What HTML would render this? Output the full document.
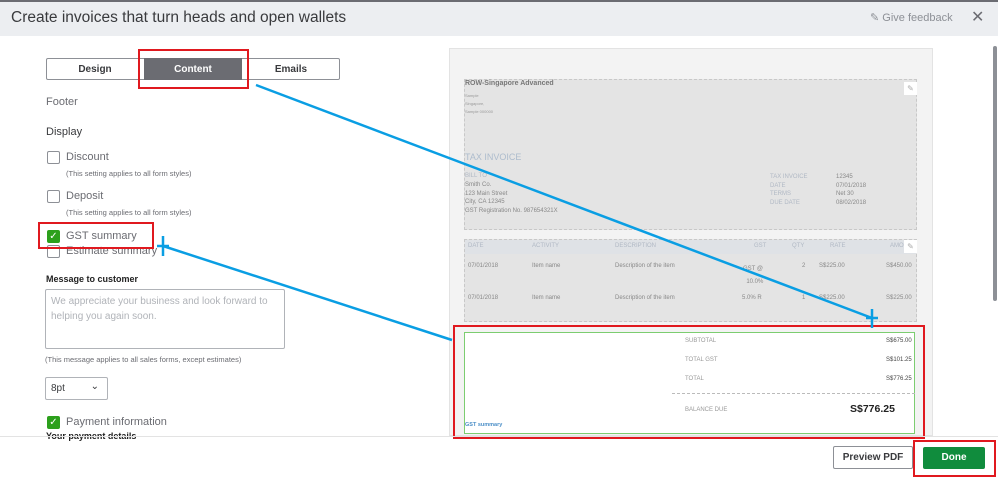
<!DOCTYPE html>
<html><head><meta charset="utf-8"><style>
*{box-sizing:border-box;margin:0;padding:0}
body{width:998px;height:480px;overflow:hidden;background:#fff;font-family:"Liberation Sans",sans-serif;position:relative;color:#393a3d}
.a{position:absolute}
.hdr{left:0;top:0;width:998px;height:36px;background:#eceef1;border-top:2px solid #6b6c72}
.t{font-size:15.5px;color:#393a3d}
.cb{width:13px;height:13px;border:1px solid #8d9096;border-radius:2px;background:#fff}
.cbon{width:13px;height:13px;background:#2ca01c;border-radius:2px;color:#fff;font-size:10px;line-height:13px;text-align:center}
.lbl{font-size:11px;color:#6b6c72}
.sm{font-size:7.5px;color:#6b6c72}
.p{font-size:6px;color:#888}
.pl{font-size:6px;color:#b0b8c4}
</style></head><body>
<div class="a hdr"></div>
<div class="a t" style="left:11px;top:9px">Create invoices that turn heads and open wallets</div>
<div class="a" style="left:870px;top:11px;font-size:11px;color:#8d9096">&#9998; Give feedback</div>
<div class="a" style="left:971px;top:7px;font-size:16px;color:#6b6c72">✕</div>
<div class="a" style="left:993px;top:46px;width:4px;height:255px;background:#8d9096;border-radius:2px"></div>

<div class="a" style="left:46px;top:58px;width:294px;height:22px;border:1px solid #8d9096;border-radius:2px"></div>
<div class="a" style="left:144px;top:58px;width:98px;height:22px;background:#6b6c72"></div>
<div class="a" style="left:46px;top:64px;width:98px;text-align:center;font-size:10px;font-weight:bold">Design</div>
<div class="a" style="left:144px;top:64px;width:98px;text-align:center;font-size:10px;font-weight:bold;color:#fff">Content</div>
<div class="a" style="left:242px;top:64px;width:98px;text-align:center;font-size:10px;font-weight:bold">Emails</div>
<div class="a" style="left:138px;top:49px;width:111px;height:40px;border:2px solid #e0191f"></div>

<div class="a lbl" style="left:46px;top:96px">Footer</div>
<div class="a lbl" style="left:46px;top:126px;color:#393a3d">Display</div>
<div class="a cb" style="left:47px;top:151px"></div><div class="a lbl" style="left:66px;top:151px">Discount</div>
<div class="a sm" style="left:66px;top:169px">(This setting applies to all form styles)</div>
<div class="a cb" style="left:47px;top:190px"></div><div class="a lbl" style="left:66px;top:190px">Deposit</div>
<div class="a sm" style="left:66px;top:208px">(This setting applies to all form styles)</div>
<div class="a cbon" style="left:47px;top:230px">✓</div><div class="a lbl" style="left:66px;top:230px">GST summary</div>
<div class="a cb" style="left:47px;top:245px"></div><div class="a lbl" style="left:66px;top:245px">Estimate summary</div>
<div class="a" style="left:38px;top:222px;width:116px;height:27px;border:2px solid #e0191f"></div>
<div class="a" style="left:46px;top:274px;font-size:9px;font-weight:bold;color:#222">Message to customer</div>
<div class="a" style="left:45px;top:289px;width:240px;height:60px;border:1px solid #b0b3b8;border-radius:2px;padding:4px 5px;font-size:10px;line-height:15px;color:#b0b3b8">We appreciate your business and look forward to helping you again soon.</div>
<div class="a sm" style="left:45px;top:355px">(This message applies to all sales forms, except estimates)</div>
<div class="a" style="left:45px;top:377px;width:63px;height:23px;border:1px solid #b0b3b8;border-radius:2px;font-size:10px;padding:5px 5px">8pt<span style="position:absolute;right:8px;top:3px;font-size:10px">&#8964;</span></div>
<div class="a cbon" style="left:47px;top:416px">✓</div><div class="a lbl" style="left:66px;top:416px">Payment information</div>
<div class="a" style="left:46px;top:431px;font-size:9px;font-weight:bold;color:#222">Your payment details</div>

<div class="a" style="left:449px;top:48px;width:484px;height:388px;background:#f3f3f3;border:1px solid #e3e3e3"></div>
<div class="a" style="left:464px;top:79px;width:453px;height:151px;background:#e4e4e4;border:1px dashed #c8c8c8"></div>
<div class="a" style="left:465px;top:80px;font-size:7px;font-weight:bold;color:#777">ROW-Singapore Advanced</div>
<div class="a" style="left:465px;top:92px;font-size:4px;color:#999;line-height:8px">Sample<br>Singapore,<br>Sample 000000</div>
<div class="a" style="left:465px;top:152px;font-size:9px;color:#adbccd">TAX INVOICE</div>
<div class="a pl" style="left:465px;top:173px">BILL TO</div>
<div class="a p" style="left:465px;top:181px;line-height:8.7px">Smith Co.<br>123 Main Street<br>City, CA 12345<br>GST Registration No. 987654321X</div>
<div class="a pl" style="left:770px;top:173px;line-height:8.7px">TAX INVOICE<br>DATE<br>TERMS<br>DUE DATE</div>
<div class="a p" style="left:836px;top:173px;line-height:8.7px">12345<br>07/01/2018<br>Net 30<br>08/02/2018</div>
<div class="a" style="left:904px;top:82px;width:13px;height:13px;background:#fff;font-size:8px;color:#aaa;text-align:center;line-height:13px">&#9998;</div>
<div class="a" style="left:464px;top:239px;width:453px;height:83px;background:#e4e4e4;border:1px dashed #c8c8c8"></div>
<div class="a" style="left:465px;top:240px;width:451px;height:14px;background:#dfe2e6"></div>
<div class="a pl" style="left:468px;top:243px">DATE</div><div class="a pl" style="left:532px;top:243px">ACTIVITY</div><div class="a pl" style="left:615px;top:243px">DESCRIPTION</div><div class="a pl" style="left:754px;top:243px">GST</div><div class="a pl" style="left:792px;top:243px">QTY</div><div class="a pl" style="left:830px;top:243px">RATE</div><div class="a pl" style="left:890px;top:243px">AMO</div>
<div class="a" style="left:904px;top:240px;width:13px;height:13px;background:#fff;font-size:8px;color:#aaa;text-align:center;line-height:13px">&#9998;</div>
<div class="a p" style="left:468px;top:263px">07/01/2018</div><div class="a p" style="left:532px;top:263px">Item name</div><div class="a p" style="left:615px;top:263px">Description of the item</div><div class="a p" style="left:743px;top:263px;line-height:13px">GST @<br>&nbsp;&nbsp;10.0%</div><div class="a p" style="left:802px;top:263px">2</div><div class="a p" style="left:819px;top:263px">S$225.00</div><div class="a p" style="left:886px;top:263px">S$450.00</div>
<div class="a p" style="left:468px;top:295px">07/01/2018</div><div class="a p" style="left:532px;top:295px">Item name</div><div class="a p" style="left:615px;top:295px">Description of the item</div><div class="a p" style="left:742px;top:295px">5.0% R</div><div class="a p" style="left:802px;top:295px">1</div><div class="a p" style="left:819px;top:295px">S$225.00</div><div class="a p" style="left:886px;top:295px">S$225.00</div>

<div class="a" style="left:464px;top:332px;width:451px;height:102px;background:#fff;border:1px solid #7ccd70"></div>
<div class="a pl" style="left:685px;top:338px;color:#999">SUBTOTAL</div><div class="a p" style="left:886px;top:338px;color:#444">S$675.00</div>
<div class="a pl" style="left:685px;top:357px;color:#999">TOTAL GST</div><div class="a p" style="left:886px;top:357px;color:#444">S$101.25</div>
<div class="a pl" style="left:685px;top:376px;color:#999">TOTAL</div><div class="a p" style="left:886px;top:376px;color:#444">S$776.25</div>
<div class="a" style="left:672px;top:393px;width:243px;border-top:1px dashed #bbb"></div>
<div class="a pl" style="left:685px;top:407px;color:#999">BALANCE DUE</div><div class="a" style="left:850px;top:403px;font-size:10.5px;font-weight:bold;color:#222">S$776.25</div>
<div class="a" style="left:465px;top:422px;font-size:5.5px;font-weight:bold;color:#4a8ec7">GST summary</div>
<div class="a" style="left:453px;top:325px;width:472px;height:114px;border:2px solid #e0191f"></div>

<div class="a" style="left:0;top:436px;width:998px;height:1px;background:#e3e3e3"></div>
<div class="a" style="left:833px;top:446px;width:80px;height:23px;border:1px solid #8d9096;border-radius:2px;font-size:10px;font-weight:bold;text-align:center;line-height:21px">Preview PDF</div>
<div class="a" style="left:923px;top:447px;width:62px;height:22px;background:#108c3d;border-radius:2px;font-size:10px;font-weight:bold;color:#fff;text-align:center;line-height:22px">Done</div>
<div class="a" style="left:913px;top:440px;width:83px;height:37px;border:2px solid #e0191f"></div>

<svg class="a" style="left:0;top:0" width="998" height="480">
<g stroke="#0a9ee3" stroke-width="2.5" fill="none">
<line x1="256" y1="85" x2="872" y2="318"/>
<line x1="163" y1="246" x2="452" y2="340"/>
<line x1="872" y1="309" x2="872" y2="328"/><line x1="866" y1="318" x2="878" y2="318"/>
<line x1="163" y1="236" x2="163" y2="256"/><line x1="157" y1="246" x2="169" y2="246"/>
</g></svg>
</body></html>
